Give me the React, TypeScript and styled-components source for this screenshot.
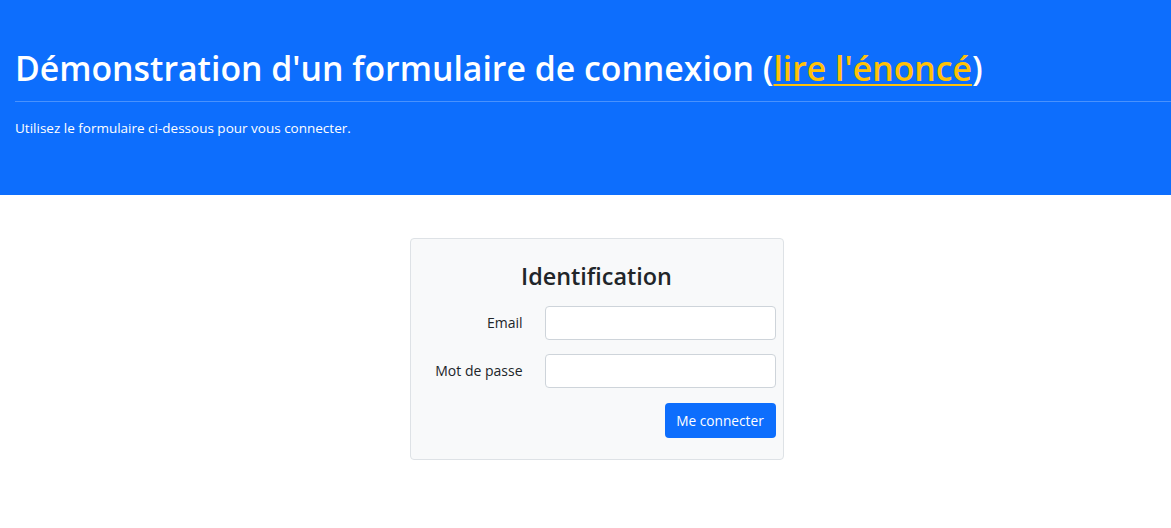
import React from "react";
import styled, { createGlobalStyle } from "styled-components";

const GlobalStyle = createGlobalStyle`
  * { box-sizing: border-box; }
  html, body { margin: 0; padding: 0; background: #ffffff; }
  body {
    font-family: "Open Sans", "Noto Sans", "Liberation Sans", sans-serif;
    color: #212529;
    -webkit-font-smoothing: antialiased;
  }
`;

const Header = styled.header`
  background: #0d6efd;
  color: #ffffff;
  height: 195px;
  padding: 44px 0 0 15px;
`;

const Title = styled.h1`
  margin: 0 0 9px;
  font-size: 33.8px;
  line-height: 48px;
  font-weight: 600;
  white-space: nowrap;
`;

const TitleLink = styled.a`
  color: #ffc107;
  text-decoration: underline;
  text-decoration-thickness: 2px;
  text-underline-offset: 3px;
`;

const Rule = styled.hr`
  margin: 0;
  border: 0;
  border-top: 1px solid #4992fd;
`;

const Lead = styled.p`
  margin: 16px 0 0;
  font-size: 13.5px;
  line-height: 21px;
`;

const Main = styled.main`
  display: flex;
  justify-content: center;
  padding: 43px 0 0 22px;
`;

const Card = styled.form`
  width: 374px;
  height: 222px;
  background: #f8f9fa;
  border: 1px solid #dee2e6;
  border-radius: 4px;
  padding: 21px 7px 0 7px;
  display: flex;
  flex-direction: column;
`;

const CardTitle = styled.h3`
  margin: 0 0 13px;
  text-align: center;
  font-size: 23.4px;
  line-height: 33px;
  font-weight: 600;
  color: #212529;
`;

const FieldRow = styled.div`
  display: grid;
  grid-template-columns: 105px 1fr;
  column-gap: 22px;
  align-items: center;
  margin-bottom: 14px;
`;

const Label = styled.label`
  text-align: right;
  font-size: 14px;
  line-height: 20px;
  color: #212529;
`;

const Input = styled.input`
  height: 34px;
  width: 100%;
  border: 1px solid #ced4da;
  border-radius: 4px;
  background: #ffffff;
  font: inherit;
  font-size: 14px;
  padding: 6px 12px;
  outline: none;
`;

const Actions = styled.div`
  display: flex;
  justify-content: flex-end;
  margin-top: 1px;
`;

const Button = styled.button`
  height: 35px;
  width: 111px;
  border: 0;
  border-radius: 4px;
  background: #0d6efd;
  color: #ffffff;
  font-family: inherit;
  font-size: 13.7px;
  padding: 0;
  cursor: pointer;
`;

export default function App() {
  return (
    <>
      <GlobalStyle />
      <Header>
        <Title>
          Démonstration d'un formulaire de connexion (
          <TitleLink href="#">lire l'énoncé</TitleLink>)
        </Title>
        <Rule />
        <Lead>Utilisez le formulaire ci-dessous pour vous connecter.</Lead>
      </Header>
      <Main>
        <Card onSubmit={(e) => e.preventDefault()}>
          <CardTitle>Identification</CardTitle>
          <FieldRow>
            <Label htmlFor="email">Email</Label>
            <Input id="email" type="email" />
          </FieldRow>
          <FieldRow>
            <Label htmlFor="password">Mot de passe</Label>
            <Input id="password" type="password" />
          </FieldRow>
          <Actions>
            <Button type="submit">Me connecter</Button>
          </Actions>
        </Card>
      </Main>
    </>
  );
}
